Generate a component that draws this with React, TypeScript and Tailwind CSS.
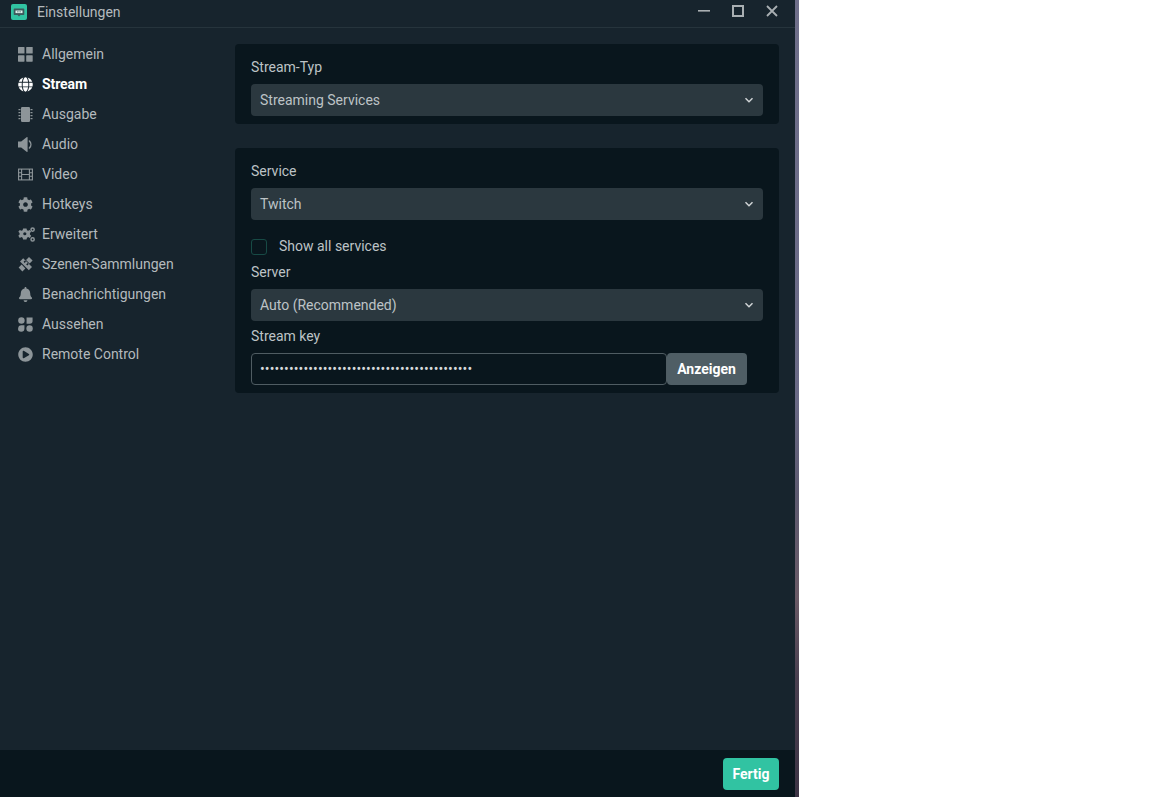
import React from "react";
import { FaGlobe, FaCog, FaBell, FaPlayCircle } from "react-icons/fa";

type IconProps = { className?: string };

function GridIcon({ className }: IconProps) {
  return (
    <svg viewBox="0 0 15 15" className={className} fill="currentColor">
      <rect x="0" y="0" width="6.5" height="6.5" rx="0.6" />
      <rect x="8.2" y="0" width="6.5" height="6.5" rx="0.6" />
      <rect x="0" y="8.2" width="6.5" height="6.5" rx="0.6" />
      <rect x="8.2" y="8.2" width="6.5" height="6.5" rx="0.6" />
    </svg>
  );
}

function ChipIcon({ className }: IconProps) {
  return (
    <svg viewBox="0 0 15 15" className={className} fill="currentColor">
      <rect x="3" y="0" width="9" height="15" rx="1.2" />
      <path d="M0.5 2h2v1.2h-2zM0.5 5h2v1.2h-2zM0.5 8h2v1.2h-2zM0.5 11h2v1.2h-2zM12.5 2h2v1.2h-2zM12.5 5h2v1.2h-2zM12.5 8h2v1.2h-2zM12.5 11h2v1.2h-2z" />
    </svg>
  );
}

function SpeakerIcon({ className }: IconProps) {
  return (
    <svg viewBox="0 0 15 15" className={className} fill="currentColor">
      <path d="M0 4.5h3.2L8.6 0.2a0.6 0.6 0 0 1 1 0.4v13.8a0.6 0.6 0 0 1-1 0.4L3.2 10.5H0z" />
      <path d="M11.4 4a5 5 0 0 1 0 7" fill="none" stroke="currentColor" strokeWidth="1.5" strokeLinecap="round" />
    </svg>
  );
}

function FilmIcon({ className }: IconProps) {
  return (
    <svg viewBox="0 0 15 15" className={className} fill="none" stroke="currentColor" strokeWidth="1.1">
      <rect x="0.6" y="2.1" width="13.8" height="10.8" />
      <path d="M3.6 2v11M11.4 2v11M0.5 5.7h3.1M0.5 9.3h3.1M11.4 5.7h3.1M11.4 9.3h3.1M3.6 7.5h7.8" />
    </svg>
  );
}

function CogsIcon({ className }: IconProps) {
  return (
    <svg viewBox="0 0 17 15" className={className} fill="currentColor">
      <g transform="translate(-0.6 -1.1) scale(1.14)">
        <path d="M5 2.2h3l.4 1.6 1.1.5 1.4-.8 1.2 1.6-1.1 1.2v1.2l1.1 1.2-1.2 1.9-1.4-.8-1.1.5-.4 1.7H5l-.4-1.7-1.1-.5-1.4.8L.8 8.7l1.1-1.2V6.3L.8 5.1 2.1 3.5l1.4.8 1.1-.5z" />
        <circle cx="6.5" cy="6.9" r="1.4" fill="#17242d" />
      </g>
      <circle cx="14.6" cy="2.6" r="1.6" fill="none" stroke="currentColor" strokeWidth="1.5" />
      <circle cx="14.6" cy="12.4" r="1.6" fill="none" stroke="currentColor" strokeWidth="1.5" />
    </svg>
  );
}

function RulerIcon({ className }: IconProps) {
  return (
    <svg viewBox="0 0 15 15" className={className} fill="currentColor">
      <path d="M5.2 1.2L14 10l-3.2 3.2L2 4.4z" />
      <path d="M0.6 10.6l3-3 3.8 3.8-3 3zM8 3l3-3 3.6 3.6-3 3z" />
      <path d="M5.6 4.8l1.3-1.3 1.1 1.1-1.3 1.3z" fill="#17242d" />
      <path d="M8.2 7.4l1.3-1.3 1.1 1.1-1.3 1.3z" fill="#17242d" />
    </svg>
  );
}

function LookIcon({ className }: IconProps) {
  return (
    <svg viewBox="0 0 14 14" className={className} fill="currentColor">
      <circle cx="3.2" cy="3.2" r="3" />
      <path d="M8 0.4h5.6v3.4a2.6 2.6 0 0 1-2.6 2.6H8z" />
      <path d="M0.2 10.8a3 3 0 0 1 3-3H6v3a3 3 0 0 1-6 0z" />
      <circle cx="10.8" cy="10.8" r="3" />
    </svg>
  );
}

function Chevron() {
  return (
    <svg viewBox="0 0 10 10" className="w-[10px] h-[10px] text-[#d0d4d6]">
      <path d="M1.5 3.2L5 6.7l3.5-3.5" fill="none" stroke="currentColor" strokeWidth="1.5" />
    </svg>
  );
}

const items: { label: string; Icon: React.ComponentType<IconProps>; active?: boolean; cls?: string }[] = [
  { label: "Allgemein", Icon: GridIcon },
  { label: "Stream", Icon: FaGlobe, active: true },
  { label: "Ausgabe", Icon: ChipIcon },
  { label: "Audio", Icon: SpeakerIcon },
  { label: "Video", Icon: FilmIcon },
  { label: "Hotkeys", Icon: FaCog },
  { label: "Erweitert", Icon: CogsIcon, cls: "w-[17px] h-[15px] -mr-[2px]" },
  { label: "Szenen-Sammlungen", Icon: RulerIcon },
  { label: "Benachrichtigungen", Icon: FaBell },
  { label: "Aussehen", Icon: LookIcon },
  { label: "Remote Control", Icon: FaPlayCircle },
];

function Select({ value }: { value: string }) {
  return (
    <div className="h-8 rounded-[4px] bg-[#2b383f] pl-[9px] pr-[9px] flex items-center justify-between text-[14px] text-[#bdc3c6]">
      <span>{value}</span>
      <Chevron />
    </div>
  );
}

function Label({ children, className = "" }: { children: React.ReactNode; className?: string }) {
  return <div className={`h-[18px] leading-[18px] text-[14px] text-[#bdc3c6] ${className}`}>{children}</div>;
}

export default function App() {
  return (
    <div className="w-[1152px] h-[797px] flex bg-white overflow-hidden font-['Roboto',sans-serif]">
      <div className="w-[795px] h-full flex flex-col bg-[#17242d]">
        <header className="h-[28px] shrink-0 border-b border-[#26343c] flex items-center pl-[11px] pr-[17px]">
          <div className="w-4 h-4 rounded-[2px] bg-[#31c3a2] flex items-center justify-center mb-[3px]">
            <svg viewBox="0 0 12 12" className="w-[12px] h-[12px]">
              <path d="M1.5 2.5h9a.8.8 0 0 1 .8.8v5a.8.8 0 0 1-.8.8H7.5L6 10.5 4.5 9.1h-3a.8.8 0 0 1-.8-.8v-5a.8.8 0 0 1 .8-.8z" fill="#3d5a5c" />
              <rect x="2.5" y="4.5" width="7" height="2.6" fill="#dff3ee" />
              <rect x="4.4" y="5.2" width="1" height="1.2" fill="#3d5a5c" />
              <rect x="6.6" y="5.2" width="1" height="1.2" fill="#3d5a5c" />
            </svg>
          </div>
          <span className="ml-[10px] text-[14px] text-[#b4babd] mb-[3px]">Einstellungen</span>
          <div className="ml-auto flex items-center gap-[22px] text-[#a9afb2] mb-[5px]">
            <svg viewBox="0 0 12 12" className="w-3 h-3"><rect x="0" y="5" width="12" height="1.6" fill="currentColor" /></svg>
            <svg viewBox="0 0 12 12" className="w-3 h-3"><rect x="1" y="1" width="10" height="10" fill="none" stroke="currentColor" strokeWidth="2" /></svg>
            <svg viewBox="0 0 12 12" className="w-3 h-3"><path d="M1 1l10 10M11 1L1 11" fill="none" stroke="currentColor" strokeWidth="1.8" /></svg>
          </div>
        </header>

        <div className="flex-1 flex min-h-0">
          <nav className="w-[235px] shrink-0 pt-[11px] pl-[18px]">
            {items.map(({ label, Icon, active, cls }) => (
              <div key={label} className="h-[30px] flex items-center">
                <Icon className={`${cls ?? "w-[15px] h-[15px]"} shrink-0 ${active ? "text-white" : "text-[#8d9599]"}`} />
                <span className={`ml-[9px] text-[14px] ${active ? "text-white font-bold tracking-[-0.1px]" : "text-[#b4babd]"}`}>{label}</span>
              </div>
            ))}
          </nav>

          <main className="flex-1 pt-4 pr-4 flex flex-col gap-6">
            <section className="rounded-[4px] bg-[#09161d] px-4 pt-[14px] pb-2">
              <Label className="mb-2">Stream-Typ</Label>
              <Select value="Streaming Services" />
            </section>

            <section className="rounded-[4px] bg-[#09161d] px-4 pt-[14px] pb-2">
              <Label className="mb-2">Service</Label>
              <Select value="Twitch" />
              <div className="mt-[19px] mb-2 h-4 flex items-center">
                <div className="w-4 h-4 rounded-[3px] border border-[#174a45]" />
                <span className="ml-3 text-[14px] leading-[14px] pb-[2px] text-[#bdc3c6]">Show all services</span>
              </div>
              <Label className="mb-2">Server</Label>
              <Select value="Auto (Recommended)" />
              <Label className="mt-[6px] mb-2">Stream key</Label>
              <div className="flex h-8">
                <div className="w-[416px] rounded-[4px] border border-[#4f5c62] pl-2 flex items-center text-[14px] text-[#d5d9db] tracking-[0.1px] overflow-hidden whitespace-nowrap">
                  {"•".repeat(44)}
                </div>
                <button className="w-20 rounded-[4px] bg-[#4f5e65] text-white text-[14px] font-bold pr-[1px]">Anzeigen</button>
              </div>
            </section>
          </main>
        </div>

        <footer className="h-[47px] shrink-0 bg-[#09161d] flex justify-end pt-2 pr-4">
          <button className="w-14 h-8 rounded-[4px] bg-[#31c3a2] text-white text-[14px] font-bold">Fertig</button>
        </footer>
      </div>
      <div className="w-1 h-full bg-[linear-gradient(180deg,#6f6f8a_0%,#6a6a86_50%,#5d5a70_62%,#6a5a66_75%,#4a4050_85%,#3d3445_100%)]" />
    </div>
  );
}
